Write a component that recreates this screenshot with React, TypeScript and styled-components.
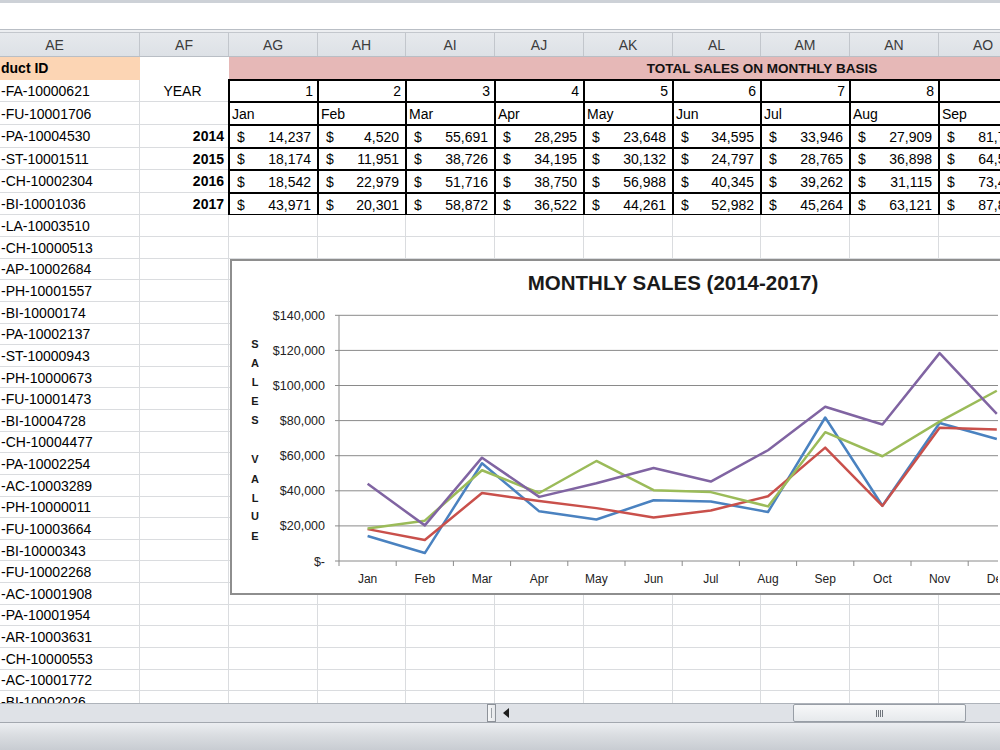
import React from "react";
import styled, { createGlobalStyle, css } from "styled-components";

const GlobalStyle = createGlobalStyle`
  html, body {
    margin: 0;
    padding: 0;
    overflow: hidden;
    background: #ffffff;
  }
  body {
    font-family: "Liberation Sans", Arial, sans-serif;
  }
`;

// sheet geometry (AE is scrolled partly off the left edge, AO runs past the right one)
const COL_WIDTHS = [140, 89, 89, 88, 89, 89, 89, 88, 89, 89, 89, 89, 89, 89];
const COL_NAMES = ["AE", "AF", "AG", "AH", "AI", "AJ", "AK", "AL", "AM", "AN", "AO"];
const TEMPLATE = COL_WIDTHS.map((w) => `${w}px`).join(" ");
const VISIBLE_MONTHS = 9; // AG..AO

const MONTHS = ["Jan", "Feb", "Mar", "Apr", "May", "Jun", "Jul", "Aug", "Sep", "Oct", "Nov", "Dec"];

const SALES: { year: number; color: string; values: number[] }[] = [
  {
    year: 2014,
    color: "#4a82c0",
    values: [14237, 4520, 55691, 28295, 23648, 34595, 33946, 27909, 81777, 31453, 78629, 69546],
  },
  {
    year: 2015,
    color: "#c9504b",
    values: [18174, 11951, 38726, 34195, 30132, 24797, 28765, 36898, 64595, 31404, 75973, 74920],
  },
  {
    year: 2016,
    color: "#9bbb59",
    values: [18542, 22979, 51716, 38750, 56988, 40345, 39262, 31115, 73410, 59688, 79412, 96999],
  },
  {
    year: 2017,
    color: "#8064a2",
    values: [43971, 20301, 58872, 36522, 44261, 52982, 45264, 63121, 87866, 77777, 118448, 83829],
  },
];

const PRODUCT_IDS = [
  "-FA-10000621",
  "-FU-10001706",
  "-PA-10004530",
  "-ST-10001511",
  "-CH-10002304",
  "-BI-10001036",
  "-LA-10003510",
  "-CH-10000513",
  "-AP-10002684",
  "-PH-10001557",
  "-BI-10000174",
  "-PA-10002137",
  "-ST-10000943",
  "-PH-10000673",
  "-FU-10001473",
  "-BI-10004728",
  "-CH-10004477",
  "-PA-10002254",
  "-AC-10003289",
  "-PH-10000011",
  "-FU-10003664",
  "-BI-10000343",
  "-FU-10002268",
  "-AC-10001908",
  "-PA-10001954",
  "-AR-10003631",
  "-CH-10000553",
  "-AC-10001772",
  "-BI-10002026",
];

const fmt = (n: number) => n.toLocaleString("en-US");
const visible = <T,>(list: T[]) => list.slice(0, VISIBLE_MONTHS);

export default function App() {
  return (
    <>
      <GlobalStyle />
      <Window>
        <TopChrome>
          <FormulaStrip />
          <ChromeDivider />
        </TopChrome>

        <HeaderRow>
          {COL_NAMES.map((name, i) => (
            <HeaderCell key={name} $first={i === 0}>
              {name}
            </HeaderCell>
          ))}
        </HeaderRow>

        <SheetBody>
          <Row $tall>
            <Cell $bold $bg="#fcd5b4">
              duct ID
            </Cell>
            <Cell $noGrid />
            <Banner>TOTAL SALES ON MONTHLY BASIS</Banner>
          </Row>

          <Row $tall>
            <Cell>{PRODUCT_IDS[0]}</Cell>
            <Cell $align="center">YEAR</Cell>
            {visible(MONTHS).map((_, i) => (
              <Cell key={i} $boxed $align="right">
                {i + 1}
              </Cell>
            ))}
          </Row>

          <Row $tall>
            <Cell>{PRODUCT_IDS[1]}</Cell>
            <Cell />
            {visible(MONTHS).map((m) => (
              <Cell key={m} $boxed>
                {m}
              </Cell>
            ))}
          </Row>

          {SALES.map((s, r) => (
            <Row key={s.year} $tall>
              <Cell>{PRODUCT_IDS[2 + r]}</Cell>
              <Cell $bold $align="right">
                {s.year}
              </Cell>
              {visible(s.values).map((v, i) => (
                <MoneyCell key={i}>
                  <span>$</span>
                  <span>{fmt(v)}</span>
                </MoneyCell>
              ))}
            </Row>
          ))}

          {PRODUCT_IDS.slice(6).map((id) => (
            <Row key={id}>
              <Cell>{id}</Cell>
              {COL_NAMES.slice(1).map((c) => (
                <Cell key={c} />
              ))}
            </Row>
          ))}

          <SalesChart />
        </SheetBody>

        <ScrollBar>
          <TabArea />
          <SplitBox />
          <ArrowButton>
            <svg width="6" height="10" viewBox="0 0 6 10">
              <path d="M6 0 L0 5 L6 10 Z" fill="#1e1e1e" />
            </svg>
          </ArrowButton>
          <Track>
            <Thumb>
              <Grip>
                <i />
                <i />
                <i />
                <i />
              </Grip>
            </Thumb>
          </Track>
        </ScrollBar>

        <StatusBar />
      </Window>
    </>
  );
}

// ---------- chart ----------

const PLOT_X0 = 107;
const PLOT_Y0 = 300;
const CAT_W = 57.2;
const PX_PER_UNIT = 35.1 / 20000;
const Y_TICKS = [0, 20000, 40000, 60000, 80000, 100000, 120000, 140000];
const AXIS_LETTERS = [
  { ch: "S", y: 83 },
  { ch: "A", y: 102 },
  { ch: "L", y: 121 },
  { ch: "E", y: 140 },
  { ch: "S", y: 159 },
  { ch: "V", y: 198 },
  { ch: "A", y: 218 },
  { ch: "L", y: 237 },
  { ch: "U", y: 255 },
  { ch: "E", y: 275 },
];

const yOf = (v: number) => PLOT_Y0 - v * PX_PER_UNIT;
const xOf = (i: number) => PLOT_X0 + CAT_W * (i + 0.5);

function SalesChart() {
  const plotRight = PLOT_X0 + CAT_W * 12;
  // Dec label sits on the right edge of the window; only the categories that fit are labelled
  const labelled = MONTHS.slice(0, 11);
  return (
    <ChartBox>
      <svg width="766" height="332">
        <text x="441" y="29" textAnchor="middle" fontSize="20.5" fontWeight="bold" fill="#1a1a1a">
          MONTHLY SALES (2014-2017)
        </text>

        {AXIS_LETTERS.map((l, i) => (
          <text key={i} x="23" y={l.y + 4} textAnchor="middle" fontSize="11" fontWeight="bold" fill="#1a1a1a">
            {l.ch}
          </text>
        ))}

        {Y_TICKS.map((v) => (
          <g key={v}>
            {v > 0 && <line x1={PLOT_X0} x2={plotRight} y1={yOf(v)} y2={yOf(v)} stroke="#8a8a8a" strokeWidth="1" />}
            <line x1={PLOT_X0 - 4} x2={PLOT_X0} y1={yOf(v)} y2={yOf(v)} stroke="#8a8a8a" strokeWidth="1" />
            <text x="93" y={yOf(v) + 4.5} textAnchor="end" fontSize="12.5" fill="#222">
              {v === 0 ? "$-" : `$${fmt(v)}`}
            </text>
          </g>
        ))}

        <line x1={PLOT_X0} x2={PLOT_X0} y1={yOf(140000)} y2={PLOT_Y0} stroke="#8a8a8a" strokeWidth="1" />
        <line x1={PLOT_X0} x2={plotRight} y1={PLOT_Y0} y2={PLOT_Y0} stroke="#8a8a8a" strokeWidth="1" />

        {Array.from({ length: 13 }).map((_, i) => (
          <line
            key={i}
            x1={PLOT_X0 + CAT_W * i}
            x2={PLOT_X0 + CAT_W * i}
            y1={PLOT_Y0}
            y2={PLOT_Y0 + 5}
            stroke="#8a8a8a"
            strokeWidth="1"
          />
        ))}

        {labelled.map((m, i) => (
          <text key={m} x={xOf(i)} y="322" textAnchor="middle" fontSize="12" fill="#222">
            {m}
          </text>
        ))}
        <text x={xOf(11) - 10} y="322" fontSize="12" fill="#222">
          De
        </text>

        {SALES.map((s) => (
          <polyline
            key={s.year}
            points={s.values.map((v, i) => `${xOf(i)},${yOf(v)}`).join(" ")}
            fill="none"
            stroke={s.color}
            strokeWidth="2.5"
            strokeLinejoin="round"
          />
        ))}
      </svg>
    </ChartBox>
  );
}

// ---------- styles ----------

const GRID_LINE = "#dadcdf";

const Window = styled.div`
  width: 1000px;
  height: 750px;
  display: flex;
  flex-direction: column;
  overflow: hidden;
  background: #fff;
`;

const TopChrome = styled.div`
  height: 33px;
  display: flex;
  flex-direction: column;
  flex-shrink: 0;
`;

const FormulaStrip = styled.div`
  height: 26px;
  border-top: 3px solid #cdd1d7;
  background: #ffffff;
`;

const ChromeDivider = styled.div`
  height: 2px;
  border-top: 1px solid #b9bec5;
  border-bottom: 1px solid #c3c7cd;
  background: #eceef1;
`;

const HeaderRow = styled.div`
  height: 24px;
  flex-shrink: 0;
  display: grid;
  grid-template-columns: ${TEMPLATE};
  background: linear-gradient(#e6e9ed, #dde1e6);
  border-bottom: 1px solid #b9bec5;
  box-sizing: border-box;
`;

const HeaderCell = styled.div<{ $first?: boolean }>`
  display: flex;
  align-items: center;
  justify-content: center;
  font-size: 14px;
  color: #3c3c3c;
  border-right: 1px solid #c2c6cc;
  ${(p) =>
    p.$first &&
    css`
      padding-right: 30px;
    `}
`;

const SheetBody = styled.div`
  position: relative;
  height: 646px;
  flex-shrink: 0;
  overflow: hidden;
`;

const Row = styled.div<{ $tall?: boolean }>`
  display: grid;
  grid-template-columns: ${TEMPLATE};
  height: ${(p) => (p.$tall ? "22.64px" : "21.63px")};
`;

const Cell = styled.div<{
  $align?: "left" | "center" | "right";
  $bold?: boolean;
  $bg?: string;
  $boxed?: boolean;
  $noGrid?: boolean;
}>`
  box-sizing: border-box;
  display: flex;
  align-items: center;
  justify-content: ${(p) =>
    p.$align === "right" ? "flex-end" : p.$align === "center" ? "center" : "flex-start"};
  padding: 1px 4px 0 ${(p) => (p.$boxed ? "3px" : "1px")};
  font-size: 14px;
  color: #000;
  white-space: nowrap;
  overflow: hidden;
  font-weight: ${(p) => (p.$bold ? 700 : 400)};
  background: ${(p) => p.$bg || "#fff"};
  border-right: 1px solid ${(p) => (p.$bg || p.$noGrid ? "transparent" : GRID_LINE)};
  border-bottom: 1px solid ${(p) => (p.$bg || p.$noGrid ? "transparent" : GRID_LINE)};
  ${(p) =>
    p.$boxed &&
    css`
      overflow: visible;
      outline: 2px solid #000;
      outline-offset: -1px;
    `}
`;

const MoneyCell = styled.div`
  box-sizing: border-box;
  display: flex;
  align-items: center;
  justify-content: space-between;
  padding: 1px 7px 0 8px;
  font-size: 14px;
  color: #000;
  white-space: nowrap;
  background: #fff;
  outline: 2px solid #000;
  outline-offset: -1px;
`;

const Banner = styled.div`
  grid-column: 3 / -1;
  display: flex;
  align-items: center;
  justify-content: center;
  background: #e6b8b7;
  font-size: 13.5px;
  font-weight: 700;
  color: #111;
`;

const ChartBox = styled.div`
  position: absolute;
  left: 230px;
  top: 202px;
  width: 800px;
  height: 336px;
  box-sizing: border-box;
  border: 2px solid #8e8e8e;
  background: #fff;
  z-index: 2;

  svg {
    display: block;
    font-family: "Liberation Sans", Arial, sans-serif;
  }
`;

const ScrollBar = styled.div`
  height: 20px;
  flex-shrink: 0;
  display: flex;
  align-items: stretch;
  box-sizing: border-box;
  background: #dfe2e7;
  border-top: 1px solid #aeb3ba;
  border-bottom: 1px solid #a3a8af;
`;

const TabArea = styled.div`
  width: 487px;
`;

const SplitBox = styled.div`
  width: 9px;
  box-sizing: border-box;
  border: 1px solid #8d9299;
  background: linear-gradient(90deg, #f6f7f8, #e6e8eb);
  position: relative;

  &::after {
    content: "";
    position: absolute;
    left: 3px;
    top: 3px;
    bottom: 3px;
    width: 1px;
    background: #9ba0a6;
  }
`;

const ArrowButton = styled.div`
  width: 19px;
  display: flex;
  align-items: center;
  justify-content: center;
`;

const Track = styled.div`
  flex: 1;
  display: flex;
  align-items: stretch;
  padding: 0 0 0 278px;
`;

const Thumb = styled.div`
  width: 173px;
  box-sizing: border-box;
  border: 1px solid #989ea6;
  border-radius: 2px;
  background: linear-gradient(#f7f8f9, #e6e9ec);
  display: flex;
  align-items: center;
  justify-content: center;
`;

const Grip = styled.div`
  display: flex;
  gap: 1px;

  i {
    display: block;
    width: 1px;
    height: 7px;
    background: #6f747b;
  }
`;

const StatusBar = styled.div`
  flex: 1;
  background: linear-gradient(#eceef1, #dadde1 45%, #c8ccd2);
`;
